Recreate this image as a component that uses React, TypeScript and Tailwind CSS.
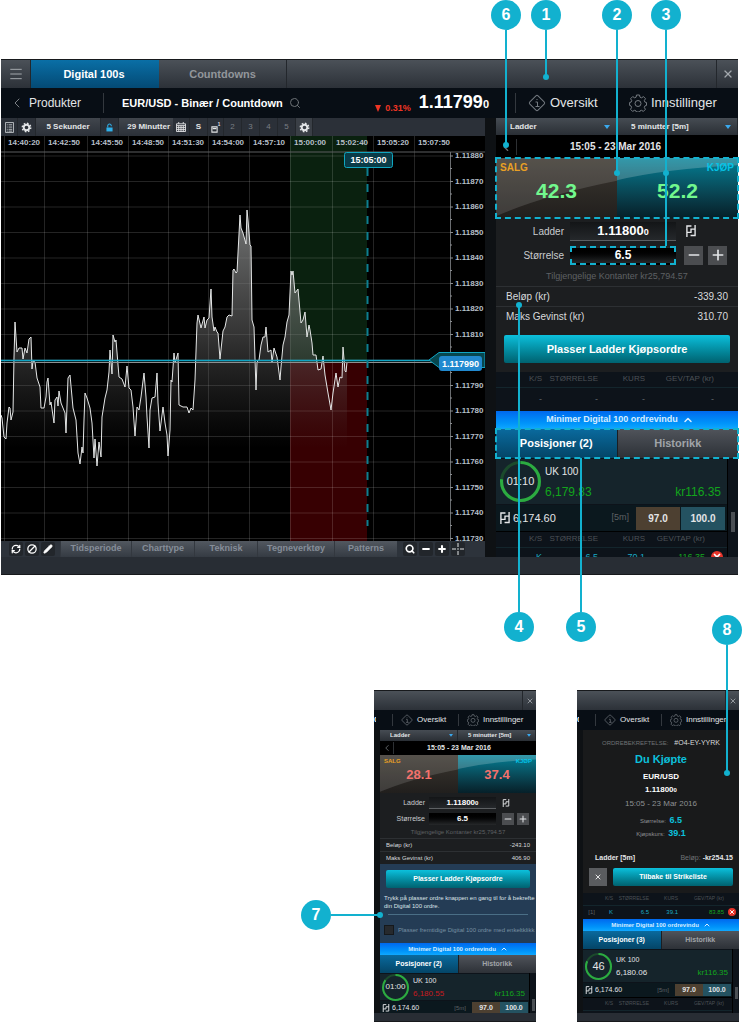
import { ReactNode } from "react";
import clsx from "clsx";
import { Ban, ChevronLeft, ChevronUp, Menu, Minus, Pencil, Plus, RefreshCw, Search, X } from "lucide-react";

const PRICE_POINTS =
  "0,279 1,282 3,301 5,303 6,287 8,271 9,272 10,284 12,276 13,221 14,186 16,216 18,212 21,212 22,223 24,212 26,217 28,203 30,201 31,233 32,225 34,226 36,242 39,251 40,272 43,272 45,261 46,246 47,242 49,269 50,266 53,287 54,264 56,261 57,270 58,255 60,267 64,277 65,297 67,242 69,239 71,261 72,272 75,284 77,317 79,328 81,311 82,317 83,284 84,257 86,262 89,272 91,287 93,322 94,303 96,330 98,306 100,321 101,281 104,262 106,254 108,236 109,214 111,238 112,199 114,206 115,204 118,241 121,243 124,251 126,230 128,252 130,254 132,271 134,300 136,271 138,274 140,261 143,237 145,261 146,281 148,312 149,274 151,262 154,261 156,237 157,267 159,295 160,287 162,271 164,287 166,299 167,320 169,294 170,244 171,246 173,217 174,227 177,217 178,269 182,271 186,271 188,277 190,272 192,274 194,244 196,187 197,179 200,192 203,181 204,192 206,184 208,182 210,153 211,181 213,195 214,191 216,196 217,197 219,223 222,195 224,191 226,181 228,179 231,180 232,134 233,133 235,137 236,136 239,79 240,92 242,97 245,108 246,74 247,84 249,109 250,110 251,184 253,191 255,254 256,226 258,224 260,209 262,201 264,201 265,191 267,216 270,214 271,226 273,212 276,221 279,244 280,231 282,209 284,201 286,186 288,179 290,135 291,139 292,135 294,157 297,153 300,187 302,184 304,176 306,201 308,189 309,194 311,207 312,219 315,219 317,234 320,233 322,220 324,239 327,257 330,274 332,257 335,237 337,251 339,241 341,242 342,211 344,235 345,236 346,226";

const TIMES = [
  { x: 3, label: "14:40:20" },
  { x: 43, label: "14:42:50" },
  { x: 86, label: "14:45:50" },
  { x: 127, label: "14:48:50" },
  { x: 167, label: "14:51:30" },
  { x: 207, label: "14:54:00" },
  { x: 248, label: "14:57:10" },
  { x: 289, label: "15:00:00" },
  { x: 331, label: "15:02:40" },
  { x: 372, label: "15:05:20" },
  { x: 413, label: "15:07:50" },
];

// the current price flag covers the 1.11800 label
const FLAG_ROW = 8;

const PRICES = Array.from({ length: 16 }, (_, i) => ({
  y: 20 + i * 25.5,
  label: (1.1188 - i * 0.0001).toFixed(5),
}));

function PriceChart() {
  return (
    <svg viewBox="0 0 484 405" className="block h-auto w-full bg-black" role="img" aria-label="EUR/USD">
      <defs>
        <linearGradient id="area" x1="0" y1="74" x2="0" y2="312" gradientUnits="userSpaceOnUse">
          <stop offset="0" stopColor="#8a8c8c" stopOpacity="0.85" />
          <stop offset="0.5" stopColor="#6f6f6f" stopOpacity="0.5" />
          <stop offset="1" stopColor="#555555" stopOpacity="0" />
        </linearGradient>
      </defs>

      <rect x="289" y="0" width="77" height="226" fill="#0a210f" />
      <rect x="289" y="226" width="77" height="179" fill="#370002" />
      {PRICES.map((p) => (
        <path key={p.label} d={`M0 ${p.y}H449`} stroke="#ffffff" strokeOpacity="0.14" />
      ))}
      {TIMES.map((t) => (
        <path key={t.label} d={`M${t.x + 0.5} 0V405`} stroke="#ffffff" strokeOpacity="0.14" />
      ))}
      <path d="M0 16H484" stroke="#5c5e60" />

      <polygon points={`0,405 ${PRICE_POINTS} 346,405`} fill="url(#area)" />
      <polyline points={PRICE_POINTS} fill="none" stroke="#e4e6e6" />

      {TIMES.map((t) => (
        <text key={t.label} x={t.x + 4} y="9" fill="#b6bfc8" fontSize="8" fontWeight="bold">
          {t.label}
        </text>
      ))}

      <path d="M449.5 16V405" stroke="#6a6d70" />
      {PRICES.map((p, i) => (
        <g key={p.label}>
          <path d={`M449 ${p.y}H452M449 ${p.y + 12.5}H451`} stroke="#8a8d90" />
          {i !== FLAG_ROW && (
            <text x="454" y={p.y + 2} fill="#b6bfc8" fontSize="8" fontWeight="bold">
              {p.label}
            </text>
          )}
        </g>
      ))}

      <path d="M0 226.5H449" stroke="#8d9092" />
      <path d="M0 224.5H430" stroke="#10a5c4" strokeWidth="1.5" />
      <path d="M366.5 32V390" stroke="#0d7f90" strokeWidth="2" strokeDasharray="8 8" />
      <rect x="343.5" y="16.5" width="48" height="15" rx="2" fill="#0a3c48" stroke="#0fa6c0" />
      <text x="367.5" y="27" textAnchor="middle" fill="#ffffff" fontSize="9" fontWeight="bold">
        15:05:00
      </text>

      <path d="M428 224L438 216.5H484V231.5H438Z" fill="#07474f" stroke="#10a5c4" />
      <rect x="438" y="220" width="43" height="15" rx="3" fill="#2189cf" />
      <text x="459.5" y="230.5" textAnchor="middle" fill="#ffffff" fontSize="9" fontWeight="bold">
        1.117990
      </text>
    </svg>
  );
}

function LadderIcon({ className }: { className: string }) {
  return (
    <svg viewBox="0 0 11 13" className={className} fill="none" stroke="#e6e8ea" strokeWidth="1.5" aria-hidden="true">
      <path d="M1 13V1H6M1 8H5.5V4.5H10M10 0V11.5H5" />
    </svg>
  );
}

function InfoIcon({ className }: { className: string }) {
  return (
    <svg viewBox="0 0 18 18" className={className} fill="none" stroke="#747a80" aria-hidden="true">
      <rect x="3.2" y="3.2" width="11.6" height="11.6" rx="1.5" transform="rotate(45 9 9)" />
      <path d="M7.5 8H9.5V12.5M7.5 12.5H11.5M8.5 5.5H9.5" />
    </svg>
  );
}

function GearIcon({ className }: { className: string }) {
  return (
    <svg viewBox="0 0 18 18" className={className} fill="none" stroke="#747a80" aria-hidden="true">
      <path d="M7.5 1h3l.5 2.2 1.5.6 2-1.2 2 2.1-1.2 1.9.6 1.5 1.6.4v2.9l-1.6.5-.6 1.5 1.1 1.9-2 2.1-1.9-1.1-1.5.6-.5 1.1h-3l-.5-1.1-1.5-.6-1.9 1.1-2.1-2.1 1.1-1.9-.6-1.5L.6 11.4V8.5l1.5-.4.6-1.5-1.1-1.9 2.1-2.1 1.9 1.2 1.5-.6z" />
      <circle cx="9" cy="9.5" r="3" />
    </svg>
  );
}

/* Solid cog of the chart toolbar */
function CogIcon() {
  return (
    <svg viewBox="0 0 12 12" className="size-[11px] shrink-0" fill="none" stroke="#e3e5e7" aria-hidden="true">
      <circle cx="6" cy="6" r="3" strokeWidth="2" />
      <circle cx="6" cy="6" r="4.6" strokeWidth="1.6" strokeDasharray="1.8 1.8" />
    </svg>
  );
}

/* Top bar shared by the three windows */
function WindowBar({ sm, children }: { sm?: boolean; children?: ReactNode }) {
  return (
    <div className={clsx("flex border-t border-[#17191c] bg-linear-to-b from-[#4b5158] to-[#2c3138]", sm ? "h-5" : "h-[29px]")}>
      {children}
      <button
        type="button"
        aria-label="Lukk"
        className={clsx("ml-auto flex items-center justify-center border-l border-[#23272c] text-[#a3a8ad]", sm ? "w-3.5" : "w-[22px]")}
      >
        <X className={sm ? "size-2" : "size-3"} strokeWidth={2.5} />
      </button>
    </div>
  );
}

function HeaderLinks({ sm }: { sm?: boolean }) {
  const link = clsx("flex items-center border-l border-[#33383e] text-[#e3e5e7]", sm ? "h-3 gap-1 text-[8px]" : "h-5 gap-1 text-[13px]");
  const icon = sm ? "size-3" : "size-[18px]";
  return (
    <>
      <a href="#oversikt" className={clsx(link, sm ? "w-[66px] pl-2" : "w-[103px] pl-3")}>
        <InfoIcon className={icon} />
        Oversikt
      </a>
      <a href="#innstillinger" className={clsx(link, sm ? "w-[78px] pl-2" : "w-[120px] border-transparent pl-2.5")}>
        <GearIcon className={icon} />
        Innstillinger
      </a>
    </>
  );
}

function Dropdown({ sm, label, value }: { sm?: boolean; label: string; value: string }) {
  return (
    <label className="relative flex flex-1 items-center border-r border-[#23272c] bg-linear-to-b from-[#464c53] to-[#2a2f35]">
      <select
        aria-label={label}
        className={clsx("w-full appearance-none bg-transparent font-bold text-[#e3e5e7]", sm ? "pl-2.5 text-[6px]" : "pl-3.5 text-[8px]")}
      >
        <option>{value}</option>
      </select>
      <svg viewBox="0 0 6 4" className={clsx("absolute fill-[#3aa9ee]", sm ? "right-1 w-1" : "right-1.5 w-1.5")} aria-hidden="true">
        <path d="M0 0H6L3 4Z" />
      </svg>
    </label>
  );
}

const DASHED =
  "relative after:pointer-events-none after:absolute after:-inset-px after:border-2 after:border-dashed after:border-[#12b1cf] after:content-['']";

interface QuoteProps {
  sm?: boolean;
  side: "sell" | "buy";
  price: string;
}

function Quote({ sm, side, price }: QuoteProps) {
  const sell = side === "sell";
  return (
    <button
      type="button"
      className={clsx(
        "relative flex flex-1 items-center justify-center font-bold",
        sell ? "bg-linear-to-b from-[#3d3831] to-[#211f1d]" : "bg-linear-to-b from-[#008096] to-[#062029]",
        sm ? "pt-0.5 text-[13px] text-[#f4716c]" : "pt-1.5 text-[21px] text-[#72f88e]",
      )}
    >
      <svg viewBox="0 0 100 100" preserveAspectRatio="none" className="absolute inset-0 size-full" aria-hidden="true">
        <path d={sell ? "M0 0H100V38Q40 62 0 97Z" : "M0 0H100V12Q40 18 0 37Z"} fill="#ffffff" fillOpacity={sell ? 0.13 : 0.2} />
      </svg>
      <span
        className={clsx(
          "absolute",
          sm ? "top-0.5 text-[6px] leading-[8px]" : "top-1 text-[10px] leading-[12px]",
          sell ? "left-1 text-[#e9a024]" : "right-1 text-[#05c3e6]",
        )}
      >
        {sell ? "SALG" : "KJØP"}
      </span>
      <span className="relative">{price}</span>
    </button>
  );
}

interface TicketProps {
  sm?: boolean;
  sell: string;
  buy: string;
  amount: string;
  maxGain: string;
}

function OrderTicket({ sm, sell, buy, amount, maxGain }: TicketProps) {
  const id = sm ? "storrelse-bekreft" : "storrelse";
  const row = clsx("flex items-center", sm ? "h-3.5" : "h-5");
  const label = clsx("text-right text-[#c9cccf]", sm ? "mr-1 w-[45px] text-[7px]" : "mr-1.5 w-[68px] text-[10px]");
  const box = clsx("text-center font-bold text-white", sm ? "mr-1.5 h-3 w-[67px]" : "mr-2 h-[19px] w-[106px]");
  const step = clsx("flex items-center justify-center bg-[#4b4d50] text-[#e3e5e7]", sm ? "mr-[3px] size-3" : "mr-[5px] size-[19px]");
  const line = clsx(
    "flex items-center justify-between border-t border-[#2d3033] bg-[#1c1e20] text-[#d8dadc]",
    sm ? "h-[13px] px-1.5 text-[6px]" : "h-5 px-2.5 text-[10px]",
  );
  return (
    <>
      <div className={clsx("flex", sm ? "h-[11px]" : "h-[17px]")}>
        <Dropdown sm={sm} label="Ordretype" value="Ladder" />
        <Dropdown sm={sm} label="Periode" value="5 minutter [5m]" />
      </div>
      <div className={clsx("flex items-center bg-black", sm ? "h-3.5 pr-3" : "h-[23px] pr-6")}>
        <button
          type="button"
          aria-label="Tilbake"
          className={clsx("flex items-center justify-center border-r border-[#2d3033] text-[#6d7276]", sm ? "h-3 w-3.5" : "h-4 w-[21px]")}
        >
          <ChevronLeft className={sm ? "size-2.5" : "size-3.5"} />
        </button>
        <p className={clsx("flex-1 text-center font-bold text-[#e3e5e7]", sm ? "text-[7px]" : "text-[10px]")}>15:05 - 23 Mar 2016</p>
      </div>
      <div className={clsx("flex", sm ? "h-[38px]" : "h-[60px]", !sm && DASHED)}>
        <Quote sm={sm} side="sell" price={sell} />
        <Quote sm={sm} side="buy" price={buy} />
      </div>

      <div className={clsx("flex flex-col bg-[#1c1e20]", sm ? "h-[45px] gap-0.5 pt-[3px]" : "h-[68px] gap-1 pt-[3px]")}>
        <div className={row}>
          <span className={label}>Ladder</span>
          <output
            className={clsx(box, "border-b border-[#5d6063] bg-linear-to-b from-[#131517] to-[#25282b]", sm ? "text-[8px] leading-[12px]" : "text-[13px] leading-[18px]")}
          >
            1.11800<small className={sm ? "text-[6px]" : "text-[9px]"}>0</small>
          </output>
          <LadderIcon className={sm ? "h-2 w-2" : "ml-0.5 h-3 w-2.5"} />
        </div>
        <div className={row}>
          <label htmlFor={id} className={label}>
            Størrelse
          </label>
          <input
            id={id}
            defaultValue="6.5"
            className={clsx(
              box,
              "bg-linear-to-b from-black to-[#26282a]",
              sm ? "text-[8px]" : "border-2 border-dashed border-[#12b1cf] text-[12px]",
            )}
          />
          <button type="button" aria-label="Mindre" className={step}>
            <Minus className={sm ? "size-2.5" : "size-4"} strokeWidth={2.5} />
          </button>
          <button type="button" aria-label="Mer" className={step}>
            <Plus className={sm ? "size-2.5" : "size-4"} strokeWidth={2.5} />
          </button>
        </div>
        <p className={clsx("text-center text-[#5e6164]", sm ? "text-[6px] leading-[8px]" : "text-[9px] leading-[14px]")}>
          Tilgjengelige Kontanter kr25,794.57
        </p>
      </div>

      <div className={line}>
        <span>Beløp (kr)</span>
        <span>{amount}</span>
      </div>
      <div className={line}>
        <span>Maks Gevinst (kr)</span>
        <span>{maxGain}</span>
      </div>
    </>
  );
}

function ActionButton({ sm, className, children }: { sm?: boolean; className?: string; children: ReactNode }) {
  return (
    <button
      type="button"
      className={clsx(
        "rounded-xs bg-linear-to-b from-[#0cc0dc] to-[#006270] font-bold text-white",
        sm ? "h-[18px] text-[7px]" : "h-7 text-[11px]",
        className,
      )}
    >
      {children}
    </button>
  );
}

interface TradesProps {
  sm?: boolean;
  id?: string;
  size?: string;
  price?: string;
  gain?: string;
}

/* Trades of one ladder. Without a size the row is an empty placeholder. */
function TradesTable({ sm, id, size, price, gain }: TradesProps) {
  const head = "p-0 text-right font-normal";
  return (
    <table className={clsx("w-full table-fixed border-collapse bg-[#0d131a] text-right", sm ? "text-[6px]" : "text-[9px]")}>
      <thead className={clsx("text-[#4c5156]", sm ? "text-[5px]" : "text-[8px]")}>
        <tr className={clsx("border-b border-[#13252c]", sm ? "h-3" : "h-[15px]")}>
          <th className={clsx(head, sm ? "w-[30px]" : "w-[46px]")}>K/S</th>
          <th className={clsx(head, sm ? "w-9" : "w-14")}>STØRRELSE</th>
          <th className={clsx(head, sm ? "w-[29px]" : "w-[47px]")}>KURS</th>
          <th className={clsx(head, sm ? "w-[46px]" : size ? "w-[60px]" : "w-[69px]")}>GEV/TAP (kr)</th>
          <th aria-label="Lukk" className="p-0" />
        </tr>
      </thead>
      <tbody>
        {size ? (
          <tr className={clsx("text-[#1aa9c2]", sm ? "h-3.5" : "h-5")}>
            <td className="p-0">
              {id && <span className="mr-3.5 text-[#5e6164]">{id}</span>}K
            </td>
            <td className="p-0">{size}</td>
            <td className="p-0">{price}</td>
            <td className="p-0 text-[#15a51f]">{gain}</td>
            <td className="p-0">
              <button
                type="button"
                aria-label="Lukk handel"
                className={clsx("flex items-center justify-center rounded-full bg-[#e8352b] text-white", sm ? "ml-1 size-2" : "ml-1.5 size-3")}
              >
                <X className={sm ? "size-1.5" : "size-2.5"} strokeWidth={4} />
              </button>
            </td>
          </tr>
        ) : (
          <tr className={clsx("text-[#63686d]", sm ? "h-3.5" : "h-6")}>
            <td className="p-0">-</td>
            <td className="p-0">-</td>
            <td className="p-0">-</td>
            <td className="p-0">-</td>
            <td className="p-0" />
          </tr>
        )}
      </tbody>
    </table>
  );
}

function Ring({ sm, value, share }: { sm?: boolean; value: string; share: number }) {
  return (
    <div className={clsx("relative flex shrink-0 items-center justify-center text-[#e3e5e7]", sm ? "size-[27px]" : "size-[41px]")}>
      <svg viewBox="0 0 40 40" className="absolute inset-0 size-full -rotate-90" fill="none" strokeWidth="3" aria-hidden="true">
        <circle cx="20" cy="20" r="18.5" stroke="#1b4a2c" />
        <circle cx="20" cy="20" r="18.5" stroke="#2cab41" pathLength="100" strokeDasharray={`${share} 100`} />
      </svg>
      <span className={clsx("relative", sm ? (value.length > 2 ? "text-[8px]" : "text-[11px]") : "text-[11px]")}>{value}</span>
    </div>
  );
}

interface PositionsProps {
  sm?: boolean;
  count: number;
  timer: string;
  share: number;
  last: string;
  lastClass: string;
  cardClass: string;
}

function Positions({ sm, count, timer, share, last, lastClass, cardClass }: PositionsProps) {
  const tab = clsx("flex-1 bg-linear-to-b font-bold", sm ? "text-[7px]" : "text-[11px]");
  const quote = clsx("flex items-center justify-center font-bold text-[#e3e5e7]", sm ? "h-3 w-7 text-[7px]" : "h-[23px] w-11 text-[10px]");
  return (
    <>
      <button
        type="button"
        className={clsx(
          "flex items-center justify-center bg-linear-to-b from-[#0068ee] to-[#10a8ff] font-bold text-[#d6ecff]",
          sm ? "h-3 gap-1 text-[6px]" : "h-[18px] gap-1 pl-1.5 text-[9px]",
        )}
      >
        Minimer Digital 100 ordrevindu
        <ChevronUp className={sm ? "size-2" : "size-3"} strokeWidth={3} />
      </button>
      <div role="tablist" className={clsx("flex", sm ? "h-[18px]" : "h-[29px]", !sm && DASHED)}>
        <button type="button" role="tab" aria-selected="true" className={clsx(tab, "from-[#0a6a9e] to-[#044567] text-white")}>
          Posisjoner ({count})
        </button>
        <button type="button" role="tab" aria-selected="false" className={clsx(tab, "border-l border-[#1b1e22] from-[#50545b] to-[#2d3137] text-[#a0a4a8]")}>
          Historikk
        </button>
      </div>

      <div className="flex h-0 grow overflow-hidden bg-[#0d131a]">
        <div className="min-w-0 flex-1">
          <div className={clsx("mt-px flex items-center bg-[#15242b]", sm ? "gap-1 pl-0.5" : "gap-1 pl-1", cardClass)}>
            <Ring sm={sm} value={timer} share={share} />
            <div className={clsx("flex-1", sm ? "pr-1" : "pr-1.5")}>
              <p className={clsx("text-[#e3e5e7]", sm ? "text-[7px] leading-[13px]" : "text-[10px] leading-[20px]")}>UK 100</p>
              <p className={clsx("flex justify-between", sm ? "text-[8px] leading-[13px]" : "text-[12px] leading-[20px]")}>
                <span className={lastClass}>{last}</span>
                <span className="text-[#12a51c]">kr116.35</span>
              </p>
            </div>
          </div>
          <div className={clsx("mt-px flex items-center border-b border-black bg-[#0b181e]", sm ? "h-[15px] pl-0.5 pr-px" : "h-[27px] gap-px pl-1 pr-0.5")}>
            <LadderIcon className={sm ? "h-2 w-2" : "h-3 w-2.5"} />
            <span className={clsx("flex-1 pl-0.5 text-[#e3e5e7]", sm ? "text-[7px]" : "text-[11px]")}>6,174.60</span>
            <span className={clsx("text-[#5e6164]", sm ? "mr-1.5 text-[6px]" : "mr-1.5 text-[9px]")}>[5m]</span>
            <button type="button" className={clsx(quote, "bg-[#4d4031]")}>
              97.0
            </button>
            <button type="button" className={clsx(quote, "bg-[#245261]")}>
              100.0
            </button>
          </div>
          <TradesTable sm={sm} size="6.5" price="70.1" gain="116.35" />
        </div>
        <div className={clsx("flex items-center border-l border-black", sm ? "w-[7px] pl-0.5" : "w-[11px] pl-[3px]")}>
          <div className={clsx("bg-[#4a4f54]", sm ? "mt-6 h-3 w-[3px]" : "mt-7 h-5 w-1")} />
        </div>
      </div>
    </>
  );
}

function Confirmation() {
  return (
    <div className="flex flex-col bg-[#191a1b] px-1.5 pt-2 pb-[7px] text-center">
      <p className="flex items-center justify-center gap-1.5 text-[6px] leading-[10px] text-[#6f7275]">
        ORDREBEKREFTELSE: <span className="text-[7px] text-[#d8dadc]">#O4-EY-YYRK</span>
      </p>
      <h2 className="text-[11px] leading-[22px] font-bold text-[#0cc0dc]">Du Kjøpte</h2>
      <p className="text-[8px] leading-[13px] font-bold text-white">EUR/USD</p>
      <p className="text-[8px] leading-[13px] font-bold text-white">
        1.11800<small className="text-[6px]">0</small>
      </p>
      <p className="mb-1 text-[8px] leading-[13px] text-[#8d9093]">15:05 - 23 Mar 2016</p>
      <p className="text-[6px] leading-[12px] text-[#8d9093]">
        Størrelse: <b className="ml-0.5 text-[9px] text-[#0cc0dc]">6.5</b>
      </p>
      <p className="text-[6px] leading-[12px] text-[#8d9093]">
        Kjøpskurs: <b className="ml-0.5 text-[9px] text-[#0cc0dc]">39.1</b>
      </p>
      <p className="mt-3 flex justify-between pl-1.5 text-[7px] leading-[12px] font-bold text-[#e3e5e7]">
        Ladder [5m]
        <span>
          <span className="font-normal text-[#6f7275]">Beløp: </span>-kr254.15
        </span>
      </p>
      <div className="mt-1 flex gap-1.5">
        <button type="button" aria-label="Avbryt" className="flex size-[18px] items-center justify-center bg-[#5a5c5f] text-white">
          <X className="size-2" strokeWidth={2.5} />
        </button>
        <ActionButton sm className="flex-1">
          Tilbake til Strikeliste
        </ActionButton>
      </div>
    </div>
  );
}

function SmallWindow({ children }: { children: ReactNode }) {
  return (
    <section className="flex w-[162px] flex-col bg-[#0e1114]">
      <WindowBar sm />
      <div className="flex h-5 items-center justify-end bg-[#080e15]">
        <span className="mr-auto w-0.5 overflow-hidden text-[8px] font-bold text-white" aria-hidden="true">
          0
        </span>
        <HeaderLinks sm />
      </div>
      <div className="ml-1.5 flex h-[283px] flex-col overflow-hidden">{children}</div>
      <div className="h-[9px] border-b border-[#17191c] bg-[#282d34]" />
    </section>
  );
}

function ChartToolbar() {
  const cell = "flex h-full items-center justify-center border-r border-[#23272c] px-0.5";
  return (
    <div className="flex h-[18px] items-center bg-[#2b3038] text-[8px] font-bold text-[#e3e5e7]">
      <button type="button" aria-label="Liste" className={clsx(cell, "w-[17px]")}>
        <svg viewBox="0 0 10 12" className="h-[11px] w-[9px]" fill="none" stroke="#c3c6c9" aria-hidden="true">
          <path d="M.5 .5H9.5V11.5H.5ZM2 3H3M4 3H8M2 5.5H3M4 5.5H8M2 8H3M4 8H8M2 10H3M4 10H8" />
        </svg>
      </button>
      <button type="button" aria-label="Oppsett" className={clsx(cell, "w-[18px]")}>
        <CogIcon />
      </button>
      <button type="button" className={clsx(cell, "w-[65px] bg-linear-to-b from-[#41464d] to-[#2b3038]")}>
        5 Sekunder
      </button>
      <button type="button" aria-label="Lås" className={clsx(cell, "w-[18px]")}>
        <svg viewBox="0 0 8 10" className="h-[9px] w-[7px]" aria-hidden="true">
          <path d="M2 5V3a2 2 0 0 1 4 0V3.5" fill="none" stroke="#2fb0ea" strokeWidth="1.2" />
          <path d="M.5 5H7.5V9.5H.5Z" fill="#2fb0ea" />
        </svg>
      </button>
      <button type="button" className={clsx(cell, "w-[54px] justify-end border-transparent bg-linear-to-b from-[#41464d] to-[#2b3038]")}>
        <span className="whitespace-nowrap">29 Minutter</span>
      </button>
      <button type="button" aria-label="Kalender" className={clsx(cell, "w-[17px]")}>
        <svg viewBox="0 0 11 11" className="size-2.5" fill="none" stroke="#e3e5e7" aria-hidden="true">
          <path d="M.5 2H10.5V10.5H.5ZM.5 4H10.5M.5 6.2H10.5M.5 8.4H10.5M3 4V10.5M5.5 4V10.5M8 4V10.5M3 0V2M8 0V2" />
        </svg>
      </button>
      <button type="button" className={clsx(cell, "w-[18px]")}>
        S
      </button>
      <button type="button" className={clsx(cell, "w-4 text-[6px]")}>
        <svg viewBox="0 0 8 8" className="mt-1 size-[7px] shrink-0" fill="none" stroke="#e3e5e7" strokeWidth="1.2" aria-hidden="true">
          <path d="M1 1H7V7H1ZM2 3H6" />
        </svg>
        <sup>1</sup>
      </button>
      {["2", "3", "4", "5"].map((n) => (
        <button key={n} type="button" className={clsx(cell, "w-[18px] font-normal text-[#797e84]")}>
          {n}
        </button>
      ))}
      <button type="button" aria-label="Innstillinger for graf" className={clsx(cell, "w-[17px] bg-[#3a3f46]")}>
        <CogIcon />
      </button>
    </div>
  );
}

function ToolButton({ label, children }: { label: string; children: ReactNode }) {
  return (
    <button type="button" aria-label={label} className="flex size-3.5 items-center justify-center rounded-xs bg-[#22262b] text-white">
      {children}
    </button>
  );
}

function DrawingToolbar() {
  const item = "h-full border-l border-[#33383f] bg-linear-to-b from-[#525860] to-[#353b43]";
  return (
    <div className="flex h-4 items-center bg-[#2d333b] text-[9px] font-bold text-[#858d98]">
      <div className="flex w-[59px] gap-0.5 pl-2">
        <ToolButton label="Oppdater">
          <RefreshCw className="size-2.5" strokeWidth={3} />
        </ToolButton>
        <ToolButton label="Nullstill">
          <Ban className="size-2.5 -scale-x-100" strokeWidth={3} />
        </ToolButton>
        <ToolButton label="Tegn">
          <Pencil className="size-2.5 fill-white" />
        </ToolButton>
      </div>
      <button type="button" className={clsx(item, "w-[71px]")}>Tidsperiode</button>
      <button type="button" className={clsx(item, "w-[63px]")}>Charttype</button>
      <button type="button" className={clsx(item, "w-[63px]")}>Teknisk</button>
      <button type="button" className={clsx(item, "w-[77px]")}>Tegneverktøy</button>
      <button type="button" className={clsx(item, "w-[63px]")}>Patterns</button>
      <div className="flex gap-0.5 pl-1.5">
        <ToolButton label="Søk">
          <Search className="size-2.5" strokeWidth={4} />
        </ToolButton>
        <ToolButton label="Zoom ut">
          <Minus className="size-2.5" strokeWidth={5} />
        </ToolButton>
        <ToolButton label="Zoom inn">
          <Plus className="size-2.5" strokeWidth={5} />
        </ToolButton>
        <ToolButton label="Trådkors">
          <svg viewBox="0 0 12 12" className="size-3" stroke="#e3e5e7" strokeDasharray="4 1.5 1 1.5 4" aria-hidden="true">
            <path d="M6 0V12M0 6H12" />
          </svg>
        </ToolButton>
      </div>
    </div>
  );
}

function TradingWindow() {
  return (
    <section className="mr-1 ml-px bg-[#0e1114]">
      <WindowBar>
        <button type="button" aria-label="Meny" className="flex w-[30px] items-center justify-center border-r border-[#23272c] text-[#a3a8ad]">
          <Menu className="size-4" strokeWidth={1.5} />
        </button>
        <button type="button" className="w-32 bg-linear-to-b from-[#0a6fa6] to-[#044a75] pr-0.5 text-[11px] font-bold text-white">
          Digital 100s
        </button>
        <button type="button" className="w-32 border-r border-[#23272c] text-[11px] font-bold text-[#92969b]">
          Countdowns
        </button>
      </WindowBar>

      <header className="flex h-[30px] items-center bg-[#080e15]">
        <a href="#produkter" className="flex h-5 w-[103px] items-center gap-1 border-r border-[#33383e] pl-2 text-[12px] text-[#e3e5e7]">
          <ChevronLeft className="size-4 text-[#7b8085]" strokeWidth={1.5} />
          Produkter
        </a>
        <h1 className="pl-[18px] text-[11px] font-bold text-white">EUR/USD - Binær / Countdown</h1>
        <Search className="ml-1.5 size-3 text-[#6d7276]" />
        <p className="ml-auto flex items-end gap-2 pr-[26px] text-white">
          <span className="flex items-center gap-1 text-[9px] leading-[16px] font-bold text-[#ee3524]">
            <svg viewBox="0 0 6 7" className="h-[7px] w-1.5 fill-[#ee3524]" aria-hidden="true">
              <path d="M0 0H6L3 7Z" />
            </svg>
            0.31%
          </span>
          <strong className="text-[18px] leading-[24px]">
            1.11799<small className="text-[11px]">0</small>
          </strong>
        </p>
        <HeaderLinks />
      </header>

      <div className="flex">
        <div className="min-w-0 flex-1">
          <ChartToolbar />
          <PriceChart />
          <DrawingToolbar />
        </div>
        <aside className="ml-[11px] flex w-[242px] shrink-0 flex-col">
          <OrderTicket sell="42.3" buy="52.2" amount="-339.30" maxGain="310.70" />
          <div className="flex flex-col bg-[#1c1e20] px-2 pt-[9px] pb-[9px]">
            <ActionButton>Plasser Ladder Kjøpsordre</ActionButton>
          </div>
          <TradesTable />
          <Positions count={2} timer="01:10" share={77} last="6,179.83" lastClass="text-[#12a51c]" cardClass="h-[45px]" />
        </aside>
      </div>
      <div className="h-[18px] border-b border-[#17191c] bg-[#282d34]" />
    </section>
  );
}

interface CalloutProps {
  n: number;
  className: string;
  lineClass: string;
  up?: boolean;
  side?: boolean;
  dot?: boolean;
}

function Callout({ n, className, lineClass, up, side, dot }: CalloutProps) {
  return (
    <div className={clsx("pointer-events-none absolute flex items-center", side ? "flex-row" : up ? "flex-col-reverse" : "flex-col", className)}>
      <span className="flex size-[30px] shrink-0 items-center justify-center rounded-full bg-[#12b1cf] text-[16px] font-bold text-white">{n}</span>
      <span className={clsx("shrink-0 bg-[#12b1cf]", lineClass)} />
      {dot && <span className={clsx("size-1.5 shrink-0 rounded-full bg-[#12b1cf]", side ? "-ml-[3px]" : up ? "-mb-[3px]" : "-mt-[3px]")} />}
    </div>
  );
}

export default function App() {
  return (
    <main className="relative overflow-hidden bg-white pt-[59px] font-['Liberation_Sans',Arial,sans-serif]">
      <TradingWindow />

      <div className="mt-[115px] flex justify-end gap-[41px] pr-[3px]">
        <SmallWindow>
          <OrderTicket sm sell="28.1" buy="37.4" amount="-243.10" maxGain="406.90" />
          <div className="flex flex-1 flex-col bg-[#243c55] px-1 pt-1.5">
            <ActionButton sm className="mx-0.5">
              Plasser Ladder Kjøpsordre
            </ActionButton>
            <p className="mt-1.5 text-[6px] leading-[8px] whitespace-nowrap text-[#dde3e8]">
              Trykk på plasser ordre knappen en gang til for å bekrefte
              <br />
              din Digital 100 ordre.
            </p>
            <hr className="mx-1 mt-1 border-[#4a6e86]" />
            <label className="mt-2.5 flex items-center gap-1 text-[6px] whitespace-nowrap text-[#7890a2]">
              <input type="checkbox" className="size-2.5 shrink-0 appearance-none border border-[#15181b] bg-[#26292d]" />
              Plasser fremtidige Digital 100 ordre med enkeltklikk
            </label>
          </div>
          <div className="flex h-[70px] flex-col">
            <Positions sm count={2} timer="01:00" share={85} last="6,180.55" lastClass="text-[#c51b20]" cardClass="h-[26px]" />
          </div>
        </SmallWindow>

        <SmallWindow>
          <Confirmation />
          <TradesTable sm id="[1]" size="6.5" price="39.1" gain="83.85" />
          <Positions sm count={3} timer="46" share={82} last="6,180.06" lastClass="text-[#e3e5e7]" cardClass="h-8" />
        </SmallWindow>
      </div>

      <Callout n={6} className="top-0 right-[221px]" lineClass="h-[115px] w-0.5" dot />
      <Callout n={1} className="top-0 right-[181px]" lineClass="h-[47px] w-0.5" dot />
      <Callout n={2} className="top-0 right-[110px]" lineClass="h-[143px] w-0.5" dot />
      <Callout n={3} className="top-0 right-[61px]" lineClass="h-[143px] w-0.5" dot />
      <span className="pointer-events-none absolute top-[173px] right-[75px] h-[73px] w-0.5 bg-[#12b1cf]" />
      <Callout n={4} className="top-[302px] right-[208px]" lineClass="h-[307px] w-0.5" up dot />
      <Callout n={5} className="top-[458px] right-[146px]" lineClass="h-[154px] w-0.5" up />
      <Callout n={7} className="top-[900px] right-[359px]" lineClass="h-0.5 w-[49px]" side dot />
      <Callout n={8} className="top-[615px] right-0" lineClass="h-[128px] w-0.5" dot />
    </main>
  );
}
